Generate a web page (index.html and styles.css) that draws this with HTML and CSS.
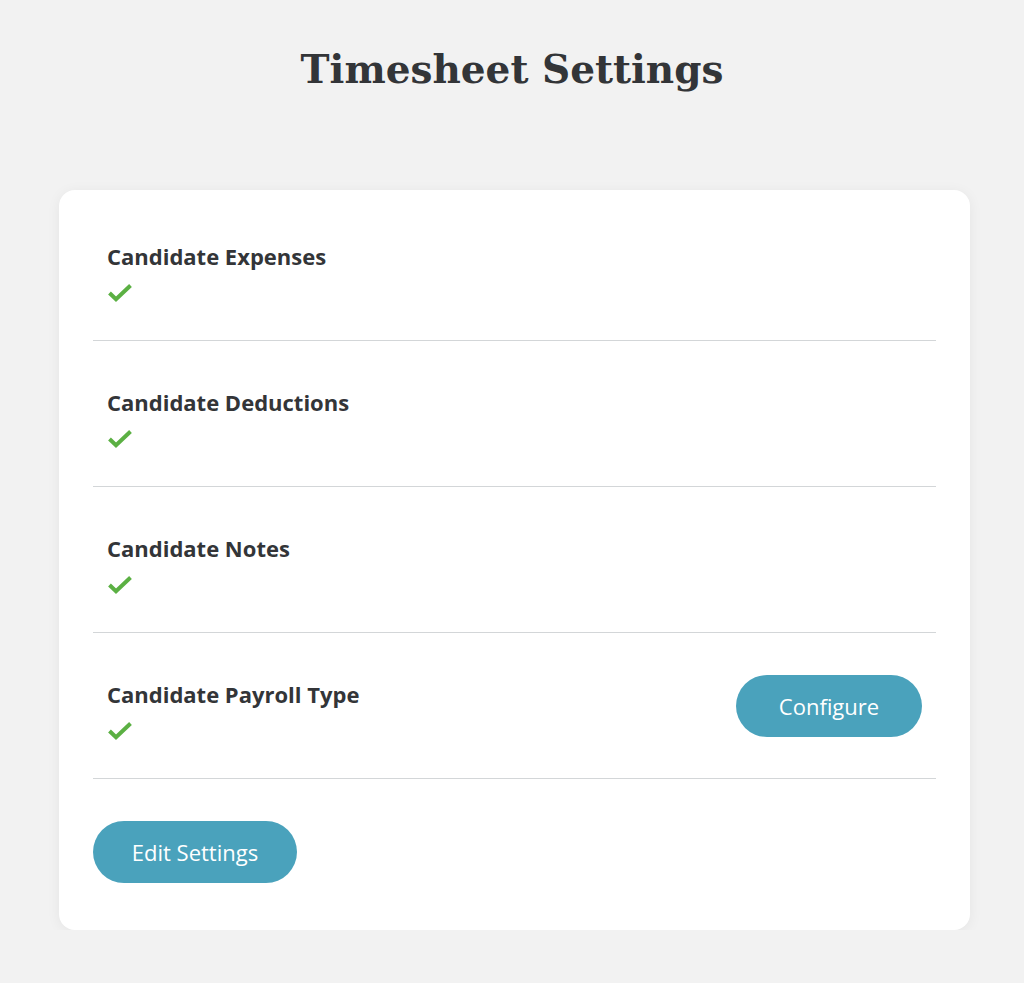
FILE: index.html
```html
<!DOCTYPE html>
<html lang="en">
<head>
    <meta charset="UTF-8">
    <meta name="viewport" content="width=device-width, initial-scale=1.0">
    <title>Timesheet Settings</title>
    <link rel="stylesheet" href="styles.css">
</head>
<body>
    <h1 class="page-title">Timesheet Settings</h1>
    <div class="card">
        <div class="setting-row">
            <div class="setting-info">
                <div class="setting-name">Candidate Expenses</div>
                <svg class="check" viewBox="0 0 26 19"><path d="M2.5 10l6.5 6.2L23.5 2.5"/></svg>
            </div>
        </div>
        <div class="setting-row">
            <div class="setting-info">
                <div class="setting-name">Candidate Deductions</div>
                <svg class="check" viewBox="0 0 26 19"><path d="M2.5 10l6.5 6.2L23.5 2.5"/></svg>
            </div>
        </div>
        <div class="setting-row">
            <div class="setting-info">
                <div class="setting-name">Candidate Notes</div>
                <svg class="check" viewBox="0 0 26 19"><path d="M2.5 10l6.5 6.2L23.5 2.5"/></svg>
            </div>
        </div>
        <div class="setting-row">
            <div class="setting-info">
                <div class="setting-name">Candidate Payroll Type</div>
                <svg class="check" viewBox="0 0 26 19"><path d="M2.5 10l6.5 6.2L23.5 2.5"/></svg>
            </div>
            <button class="btn btn-configure">Configure</button>
        </div>
        <button class="btn btn-edit">Edit Settings</button>
    </div>
</body>
</html>
```

FILE: styles.css
```css
body {
    font-family: "Open Sans", "Lato", sans-serif;
    background-color: #f2f2f2;
    color: #333538;
    margin: 0;
    padding: 0;
}
.page-title {
    font-family: "DejaVu Serif", "Liberation Serif", serif;
    font-size: 39px;
    font-weight: bold;
    text-align: center;
    margin: 0;
    padding-top: 46px;
    height: 150px;
    box-sizing: border-box;
}
.card {
    width: 911px;
    margin: 40px 0 0 59px;
    padding: 5px 34px 47px;
    box-sizing: border-box;
    background: white;
    border-radius: 16px;
    box-shadow: 0 2px 14px rgba(0, 0, 0, 0.06);
}
.setting-row {
    display: flex;
    align-items: center;
    justify-content: space-between;
    height: 146px;
    box-sizing: border-box;
    padding: 0 14px;
    border-bottom: 1px solid #d3d6d8;
}
.setting-info {
    display: flex;
    flex-direction: column;
    gap: 12px;
    align-self: flex-start;
    padding-top: 46px;
}
.setting-name {
    font-size: 22px;
    font-weight: 700;
}
.check {
    width: 26px;
    height: 19px;
    fill: none;
    stroke: #5bb043;
    stroke-width: 4;
}
.btn {
    background-color: #4aa2bc;
    color: white;
    border: none;
    border-radius: 31px;
    height: 62px;
    font-family: inherit;
    font-size: 22px;
    cursor: pointer;
}
.btn-configure {
    width: 186px;
}
.btn-edit {
    width: 204px;
    margin-top: 42px;
}
```
